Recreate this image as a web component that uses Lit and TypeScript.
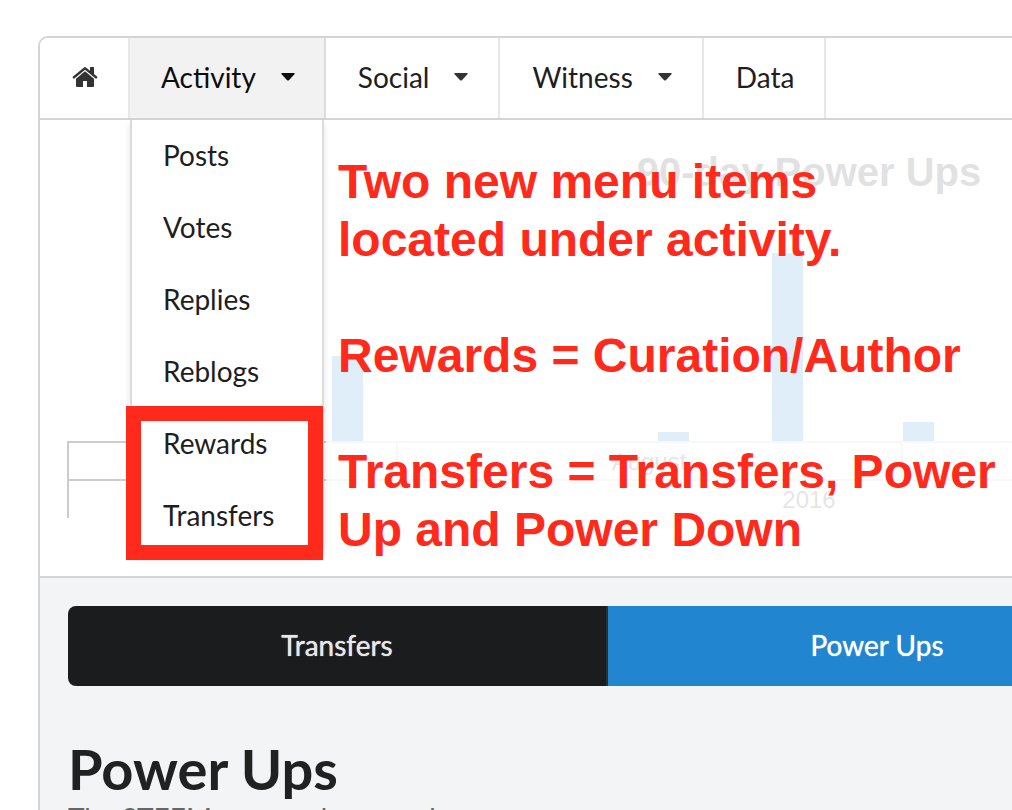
import { LitElement, html, svg, css, nothing } from "lit";
import { customElement, property, state } from "lit/decorators.js";

const caret = html`<svg class="caret" viewBox="0 0 14 8" aria-hidden="true">
  <path d="M1 0H13Q14.2 .2 13.4 1.2L7.9 7.2Q7 8 6.1 7.2L.6 1.2Q-.2 .2 1 0Z" fill="currentColor" />
</svg>`;

interface Bar {
  x: number;
  value: number;
}

@customElement("power-chart")
export class PowerChart extends LitElement {
  @property({ attribute: false }) bars: Bar[] = [
    { x: 292, value: 85 },
    { x: 618, value: 9 },
    { x: 732, value: 188 },
    { x: 863, value: 19 },
  ];

  static styles = css`
    :host {
      display: block;
      overflow: hidden;
    }
    svg {
      display: block;
      font-family: "Liberation Sans", Arial, sans-serif;
    }
    .title {
      font-size: 40px;
      font-weight: 700;
      fill: #3a3a3f;
    }
    .label {
      font-size: 24px;
      fill: #555;
    }
    .axis {
      stroke: #ccc;
      stroke-width: 2;
      fill: none;
    }
    .bar {
      fill: #2f8dd3;
    }
  `;

  render() {
    return html`<svg width="1540" height="456" role="img" aria-label="90-day Power Ups">
      <text class="title" x="769" y="66" text-anchor="middle">90-day Power Ups</text>
      ${this.bars.map((b) => svg`<rect class="bar" x=${b.x} y=${321 - b.value} width="31" height=${b.value} />`)}
      <path class="axis" d="M28 398V322H1540M28 360H1540M357 322V360M862 322V360" />
      <text class="label" x="609" y="350" text-anchor="middle">August</text>
      <text class="label" x="769" y="388" text-anchor="middle">2016</text>
    </svg>`;
  }
}

@customElement("app-root")
export class AppRoot extends LitElement {
  @state() private open = true;

  private entries = ["Posts", "Votes", "Replies", "Reblogs", "Rewards", "Transfers"];

  static styles = css`
    :host {
      display: block;
      box-sizing: border-box;
      height: 100vh;
      overflow: hidden;
      padding: 36px 0 0 38px;
      background: #fff;
      color: #1e1e1e;
      font: 400 28px/32px Lato, sans-serif;
    }
    .frame {
      box-sizing: border-box;
      min-height: 100%;
      border: solid #d4d4d5;
      border-width: 2px 0 0 2px;
      border-radius: 10px 0 0 0;
      background: #f3f4f5;
    }
    nav {
      display: flex;
      height: 80px;
      border-bottom: 2px solid #d4d4d5;
      border-radius: 8px 0 0 0;
      background: #fff;
    }
    .slot {
      position: relative;
      display: flex;
      border-right: 2px solid #e8e8e8;
    }
    .slot.active {
      border-color: #dcdcdd;
    }
    .item {
      display: flex;
      align-items: center;
      gap: 25px;
      padding: 0 30px 2px 32px;
      border: 0;
      background: none;
      color: inherit;
      font: inherit;
      text-decoration: none;
      cursor: pointer;
    }
    .active .item {
      padding-left: 31px;
      padding-right: 29px;
      background: #f2f2f2;
      color: #0d0d0d;
    }
    .caret {
      width: 14px;
      height: 8px;
      color: #333;
    }
    .active .caret {
      color: #0d0d0d;
    }
    .home {
      width: 26px;
      height: 22px;
      fill: #333;
    }
    .menu {
      position: absolute;
      z-index: 3;
      top: 82px;
      left: 0;
      right: 0;
      margin: 0;
      padding: 0;
      list-style: none;
      background: #fff;
      border: solid #dcdcdd;
      border-width: 0 2px 2px;
      border-radius: 0 0 8px 8px;
      box-shadow: 0 4px 6px rgba(34, 36, 38, 0.12);
    }
    .menu a {
      display: block;
      padding: 19px 31px 21px;
      color: inherit;
      text-decoration: none;
    }
    .marker {
      position: absolute;
      z-index: 4;
      left: -6px;
      right: -1px;
      bottom: -8px;
      height: 124px;
      border: 15px solid #ff2a1c;
      pointer-events: none;
    }
    .stage {
      position: relative;
      background: #fff;
      border-bottom: 2px solid #d4d4d5;
    }
    .note {
      position: absolute;
      inset: 0 0 0 286px;
      padding: 33px 0 0 12px;
      background: rgba(255, 255, 255, 0.85);
      color: #ff2a1c;
      font: 700 48px/58px "Liberation Sans", Arial, sans-serif;
      white-space: pre;
    }
    .note p {
      margin: 0 0 58px;
    }
    .content {
      padding: 28px 0 0 28px;
    }
    .tabs {
      display: flex;
      overflow: hidden;
      border-radius: 8px 0 0 8px;
      background: #1b1c1d;
    }
    .tabs a {
      flex: 0 0 538px;
      padding: 23px 0 25px;
      border-right: 2px solid #2d2e2f;
      color: #e8e8e8;
      text-align: center;
      text-decoration: none;
      text-shadow: 0 0 1px currentColor;
    }
    .tabs .current {
      background: #2185d0;
      color: #fff;
    }
    h1 {
      margin: 50px 0 0;
      font-size: 56px;
      line-height: 66px;
      font-weight: 700;
      color: #212121;
    }
    .sub {
      margin: 0;
      color: #666;
      white-space: nowrap;
    }
  `;

  private toggle() {
    this.open = !this.open;
  }

  private menu() {
    return html`<ul class="menu">
      ${this.entries.map((e) => html`<li><a href="#${e.toLowerCase()}">${e}</a></li>`)}
      <li class="marker" aria-hidden="true"></li>
    </ul>`;
  }

  render() {
    return html`<div class="frame">
      <nav>
        <div class="slot">
          <a class="item" href="#home" aria-label="Home">
            <svg class="home" viewBox="0 0 26 22" aria-hidden="true">
              <path d="M13 5.2L22 12.8V20Q22 21 21 21H15V15H11V21H5Q4 21 4 20V12.8Z" />
              <path d="M12 1.4Q13 .6 14 1.4L18 4.7V1.5Q18 1 18.6 1H21.4Q22 1 22 1.5V8L25.3 10.8Q25.7 11.2 25.3 11.6L24.5 12.5Q24.1 12.9 23.6 12.5L13 3.7L2.4 12.5Q1.9 12.9 1.5 12.5L.7 11.6Q.3 11.2 .7 10.8Z" />
            </svg>
          </a>
        </div>
        <div class="slot active">
          <button class="item" aria-expanded=${this.open} @click=${this.toggle}>Activity ${caret}</button>
          ${this.open ? this.menu() : nothing}
        </div>
        <div class="slot"><button class="item">Social ${caret}</button></div>
        <div class="slot"><button class="item">Witness ${caret}</button></div>
        <div class="slot"><a class="item" href="#data">Data</a></div>
      </nav>
      <section class="stage">
        <power-chart></power-chart>
        <div class="note"><p>Two new menu items
located under activity.</p><p>Rewards = Curation/Author</p><p>Transfers = Transfers, Power
Up and Power Down</p></div>
      </section>
      <main class="content">
        <div class="tabs">
          <a href="#transfers">Transfers</a>
          <a class="current" href="#powerups">Power Ups</a>
        </div>
        <h1>Power Ups</h1>
        <p class="sub">The STEEM powered up per day</p>
      </main>
    </div>`;
  }
}
